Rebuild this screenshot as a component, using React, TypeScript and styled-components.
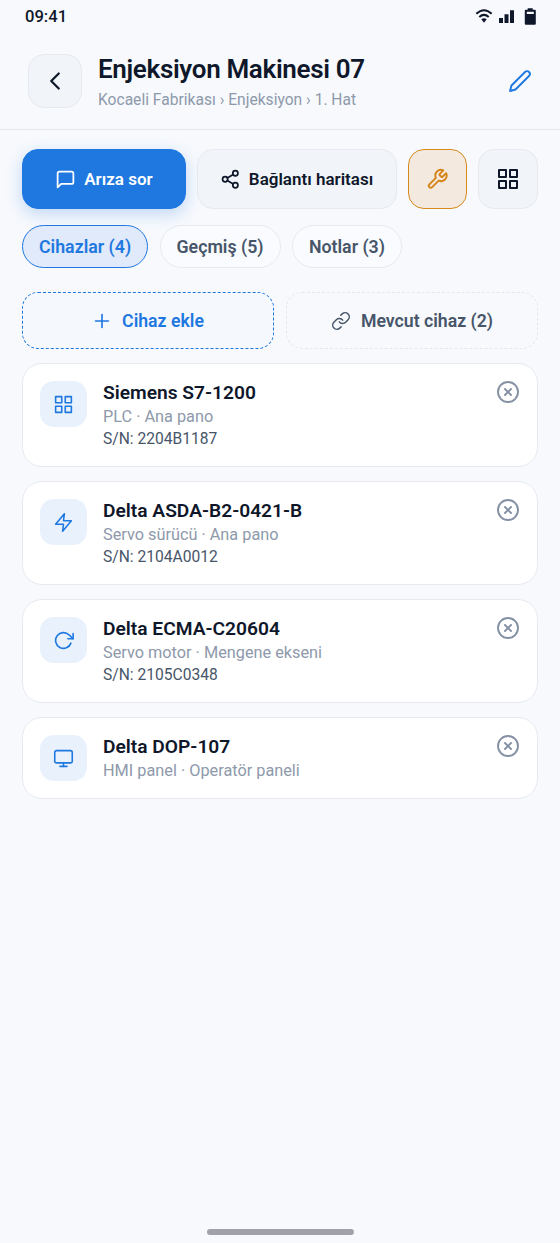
import React from 'react';
import styled, { createGlobalStyle } from 'styled-components';
import {
  FiMessageSquare, FiShare2, FiTool, FiGrid, FiPlus, FiLink, FiXCircle,
  FiZap, FiRotateCw, FiMonitor, FiEdit2, FiChevronLeft,
} from 'react-icons/fi';
import type { IconType } from 'react-icons';

const GlobalStyle = createGlobalStyle`
  * { box-sizing: border-box; }
  body { margin: 0; background: #f7f9fd; }
  button { font: inherit; margin: 0; padding: 0; background: none; border: none; }
  svg { display: block; flex: none; }
`;

const Screen = styled.div`
  width: 560px;
  height: 1243px;
  display: flex;
  flex-direction: column;
  background: #f7f9fd;
  color: #0f172a;
  font-family: Roboto, "Liberation Sans", sans-serif;
  overflow: hidden;
`;

const StatusBar = styled.div`
  height: 33px;
  flex: none;
  display: flex;
  align-items: center;
  justify-content: space-between;
  padding: 0 21.5px 0 25px;
  font-size: 16.6px;
  font-weight: 500;
`;

const Header = styled.header`
  height: 97px;
  flex: none;
  display: flex;
  align-items: center;
  padding: 0 28px 0 27.5px;
  border-bottom: 1px solid #e4e8ee;
`;

const BackButton = styled.button`
  width: 54px;
  height: 54px;
  display: flex;
  align-items: center;
  justify-content: center;
  border: 1px solid #e6eaf0;
  border-radius: 16px;
  background: #f1f5f9;
  color: #0f172a;
`;

const Heading = styled.div`
  flex: 1;
  margin-left: 16.5px;
  padding-top: 2px;
`;

const Title = styled.h1`
  margin: 0;
  font-size: 26px;
  line-height: 32px;
  font-weight: 600;
  letter-spacing: -0.33px;
  white-space: nowrap;
`;

const Crumbs = styled.div`
  margin-top: 4px;
  font-size: 15.6px;
  line-height: 22px;
  color: #8e99ab;
  white-space: nowrap;
`;

const EditButton = styled.button`
  color: #1e78e0;
`;

const Actions = styled.div`
  display: flex;
  gap: 10.8px;
  padding: 19px 22px 0;
`;

const actionTones = {
  primary: { bg: '#1e78e0', border: '#1e78e0', fg: '#ffffff', shadow: '0 5px 16px rgba(30, 120, 224, 0.25)' },
  neutral: { bg: '#f1f5f9', border: '#e6eaf0', fg: '#0f172a', shadow: 'none' },
  warning: { bg: '#f3e9df', border: '#d68a1c', fg: '#d68315', shadow: 'none' },
};

const ActionButton = styled.button<{ $tone: keyof typeof actionTones; $width: number }>`
  width: ${(p) => p.$width}px;
  height: 60px;
  flex: none;
  display: flex;
  align-items: center;
  justify-content: center;
  gap: 8px;
  border: 1px solid ${(p) => actionTones[p.$tone].border};
  border-radius: 16px;
  background: ${(p) => actionTones[p.$tone].bg};
  color: ${(p) => actionTones[p.$tone].fg};
  box-shadow: ${(p) => actionTones[p.$tone].shadow};
  font-size: 17px;
  font-weight: 600;
  white-space: nowrap;
`;

const Tabs = styled.div`
  display: flex;
  gap: 11.4px;
  padding: 16px 22px 0;
`;

const Tab = styled.button<{ $active?: boolean }>`
  height: 43px;
  padding: 0 16px;
  border: 1px solid ${(p) => (p.$active ? '#1e78e0' : '#e6eaf0')};
  border-radius: 22px;
  background: ${(p) => (p.$active ? '#e0eafa' : '#f9fbfe')};
  color: ${(p) => (p.$active ? '#1e78e0' : '#475569')};
  font-size: 17.75px;
  font-weight: 600;
  white-space: nowrap;
`;

const AddRow = styled.div`
  display: flex;
  justify-content: space-between;
  padding: 24px 22px 0;
`;

const AddButton = styled.button<{ $primary?: boolean }>`
  width: 252px;
  height: 57px;
  display: flex;
  align-items: center;
  justify-content: center;
  gap: ${(p) => (p.$primary ? 9 : 10)}px;
  padding-right: ${(p) => (p.$primary ? 1 : 0)}px;
  border: 1px dashed ${(p) => (p.$primary ? '#1e78e0' : '#e4e8ee')};
  border-radius: 16px;
  background: ${(p) => (p.$primary ? '#f5f9fe' : 'transparent')};
  color: ${(p) => (p.$primary ? '#1e78e0' : '#475569')};
  font-size: 17.7px;
  font-weight: 600;
  white-space: nowrap;
`;

const DeviceList = styled.div`
  display: flex;
  flex-direction: column;
  gap: 14px;
  padding: 14px 22px 0;
`;

const Card = styled.article`
  display: flex;
  align-items: flex-start;
  padding: 17px 17px 16px;
  border: 1px solid #e6eaf0;
  border-radius: 20px;
  background: #ffffff;
`;

const DeviceIcon = styled.div`
  width: 47px;
  height: 46px;
  display: flex;
  align-items: center;
  justify-content: center;
  border-radius: 14px;
  background: #e8f1fc;
  color: #1e78e0;
`;

const DeviceText = styled.div`
  flex: 1;
  margin-left: 16px;
`;

const DeviceName = styled.div`
  margin-bottom: 1px;
  font-size: 19.2px;
  line-height: 24px;
  font-weight: 600;
`;

const DeviceKind = styled.div`
  font-size: 16.3px;
  line-height: 22px;
  color: #8e99ab;
`;

const Serial = styled.div`
  font-size: 15.6px;
  line-height: 22px;
  color: #475569;
`;

const RemoveButton = styled.button`
  margin-top: -1px;
  color: #8490a3;
`;

const HomeIndicator = styled.div`
  width: 147px;
  height: 5.5px;
  margin: auto auto 8.5px;
  flex: none;
  border-radius: 3px;
  background: #9fa3a9;
`;

type Device = { icon: IconType; name: string; kind: string; serial?: string };

const devices: Device[] = [
  { icon: FiGrid, name: 'Siemens S7-1200', kind: 'PLC · Ana pano', serial: '2204B1187' },
  { icon: FiZap, name: 'Delta ASDA-B2-0421-B', kind: 'Servo sürücü · Ana pano', serial: '2104A0012' },
  { icon: FiRotateCw, name: 'Delta ECMA-C20604', kind: 'Servo motor · Mengene ekseni', serial: '2105C0348' },
  { icon: FiMonitor, name: 'Delta DOP-107', kind: 'HMI panel · Operatör paneli' },
];

const StatusIcons = () => (
  <svg width="64" height="20" viewBox="0 0 64 20" fill="none">
    <path d="M1.3 6.8Q9 -0.2 16.7 6.8" stroke="#0f172a" strokeWidth="2" />
    <path d="M4.3 10Q9 5.8 13.7 10" stroke="#0f172a" strokeWidth="2" />
    <path d="M6.3 12.3Q9 10.2 11.7 12.3L9 15.7Z" fill="#0f172a" />
    <path d="M24 11h4v5h-4zM29.5 7.3h4v8.7h-4zM35 3.3h4v12.7h-4z" fill="#0f172a" />
    <path fillRule="evenodd" d="M52.7 1.3h5v1.5h2.1a1 1 0 0 1 1 1v13a1 1 0 0 1-1 1h-9a1 1 0 0 1-1-1v-13a1 1 0 0 1 1-1h1.9zM51.8 4.7v2.3h7v-2.3z" fill="#0f172a" />
  </svg>
);

export default function App() {
  return (
    <>
      <GlobalStyle />
      <Screen>
        <StatusBar>
          <span>09:41</span>
          <StatusIcons />
        </StatusBar>
        <Header>
          <BackButton aria-label="Geri"><FiChevronLeft size={30} strokeWidth={1.8} /></BackButton>
          <Heading>
            <Title>Enjeksiyon Makinesi 07</Title>
            <Crumbs>Kocaeli Fabrikası › Enjeksiyon › 1. Hat</Crumbs>
          </Heading>
          <EditButton aria-label="Düzenle"><FiEdit2 size={24} strokeWidth={1.9} /></EditButton>
        </Header>
        <Actions>
          <ActionButton $tone="primary" $width={164}><FiMessageSquare size={21} />Arıza sor</ActionButton>
          <ActionButton $tone="neutral" $width={200}><FiShare2 size={20.5} />Bağlantı haritası</ActionButton>
          <ActionButton $tone="warning" $width={59.5} aria-label="Bakım"><FiTool size={22.5} /></ActionButton>
          <ActionButton $tone="neutral" $width={60} aria-label="Görünüm"><FiGrid size={24} /></ActionButton>
        </Actions>
        <Tabs>
          <Tab $active>Cihazlar (4)</Tab>
          <Tab>Geçmiş (5)</Tab>
          <Tab>Notlar (3)</Tab>
        </Tabs>
        <AddRow>
          <AddButton $primary><FiPlus size={22} strokeWidth={1.8} />Cihaz ekle</AddButton>
          <AddButton><FiLink size={20} strokeWidth={1.8} />Mevcut cihaz (2)</AddButton>
        </AddRow>
        <DeviceList>
          {devices.map(({ icon: Icon, name, kind, serial }) => (
            <Card key={name}>
              <DeviceIcon><Icon size={21} strokeWidth={1.8} /></DeviceIcon>
              <DeviceText>
                <DeviceName>{name}</DeviceName>
                <DeviceKind>{kind}</DeviceKind>
                {serial && <Serial>S/N: {serial}</Serial>}
              </DeviceText>
              <RemoveButton aria-label="Kaldır"><FiXCircle size={24} strokeWidth={1.9} /></RemoveButton>
            </Card>
          ))}
        </DeviceList>
        <HomeIndicator />
      </Screen>
    </>
  );
}
